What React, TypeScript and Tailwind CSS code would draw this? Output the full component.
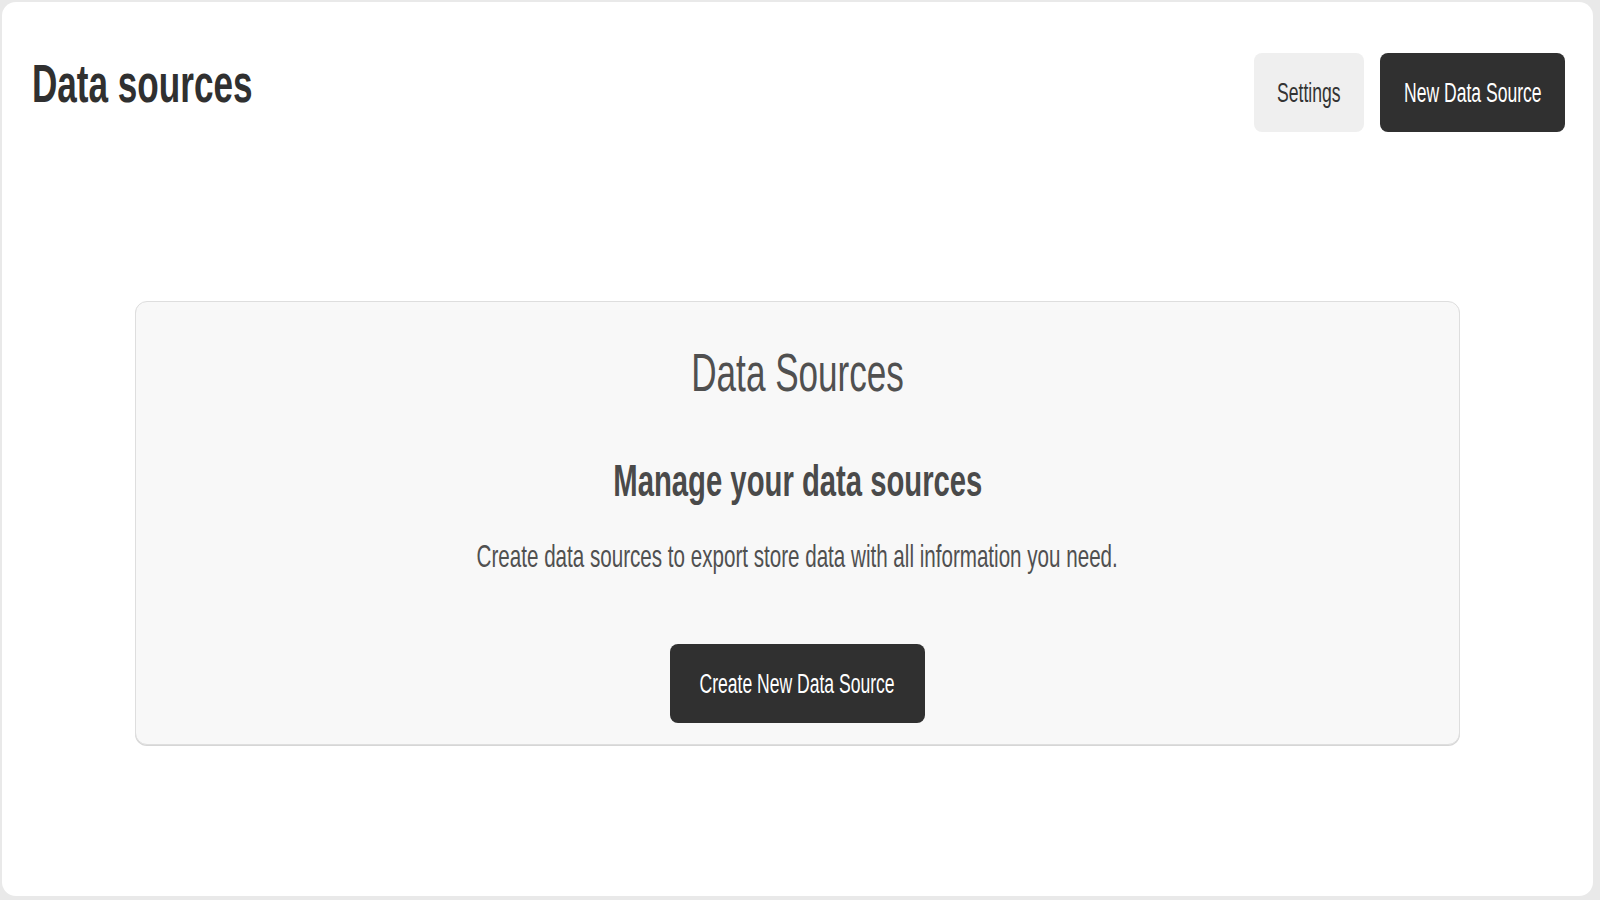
import React from "react";

// Text in this view is drawn horizontally condensed, so each label is an
// inline-block scaled on the x axis.
const squeeze = "inline-block whitespace-nowrap scale-x-[0.65]";

function Button({
  label,
  dark,
  className = "",
}: {
  label: string;
  dark?: boolean;
  className?: string;
}) {
  return (
    <button
      className={`flex h-[79px] items-center justify-center rounded-[8px] pt-[2px] text-[27px] ${
        dark ? "bg-[#303030] text-white" : "bg-[#efefef] text-[#333]"
      } ${className}`}
    >
      <span className={`${squeeze} origin-center leading-none`}>{label}</span>
    </button>
  );
}

export default function App() {
  return (
    <div
      className="h-screen w-full bg-[#e9e9e9] pb-[4px] pl-[2px] pr-[7px] pt-[2px]"
      style={{ fontFamily: '"Liberation Sans", Arial, sans-serif' }}
    >
      <div className="h-full rounded-[14px] bg-white pl-[30px] pr-[28px] pt-[51px]">
        {/* Header */}
        <div className="flex items-start justify-between">
          <h1 className="pt-[3px] text-[54px] font-bold leading-none text-[#303030]">
            <span className={`${squeeze} origin-left`}>Data sources</span>
          </h1>
          <div className="flex gap-4">
            <Button label="Settings" className="w-[110px]" />
            <Button label="New Data Source" dark className="w-[185px]" />
          </div>
        </div>

        {/* Empty state card */}
        <div className="ml-[103px] mr-[105px] mt-[169px] flex flex-col items-center rounded-[12px] border border-[#dedede] bg-[#f8f8f8] pb-[21px] pt-[43px] shadow-[0_1px_0_#d6d6d6]">
          <h2 className="text-[54px] leading-none text-[#505050]">
            <span className={`${squeeze} origin-center`}>Data Sources</span>
          </h2>
          <h3 className="mt-[59px] text-[45px] font-bold leading-none text-[#4a4a4a]">
            <span className={`${squeeze} origin-center`}>Manage your data sources</span>
          </h3>
          <p className="mt-[38px] text-[31.7px] leading-none text-[#505050]">
            <span className={`${squeeze} origin-center`}>
              Create data sources to export store data with all information you need.
            </span>
          </p>
          <Button label="Create New Data Source" dark className="mt-[71px] h-[78px] w-[255px]" />
        </div>
      </div>
    </div>
  );
}
